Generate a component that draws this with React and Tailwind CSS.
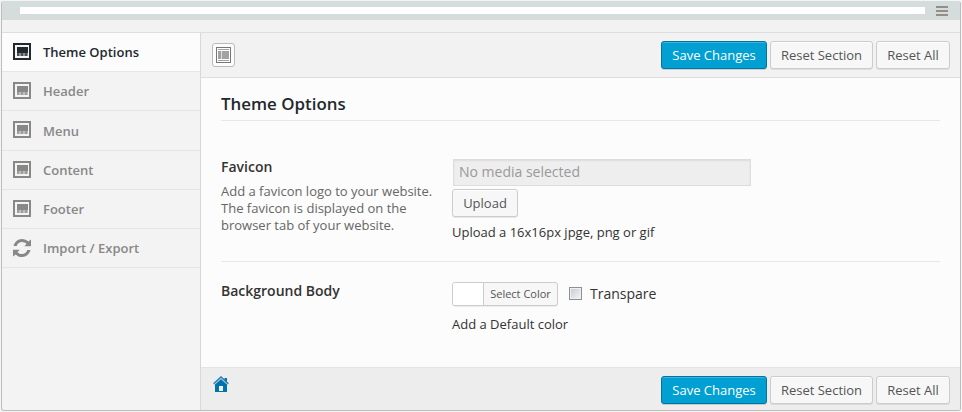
const navItems = [
  { label: 'Theme Options', active: true, size: 'h-[39px]', offset: 'mt-[10px]' },
  { label: 'Header', size: 'h-[39px]', offset: 'mt-[10px]' },
  { label: 'Menu', size: 'h-[40px]', offset: 'mt-[11px]' },
  { label: 'Content', size: 'h-[39px]', offset: 'mt-[10px]' },
  { label: 'Footer', size: 'h-[39px]', offset: 'mt-[10px]' },
  { label: 'Import / Export', refresh: true, size: 'h-[39px]', offset: 'mt-[10px]' },
];

function PanelIcon() {
  return (
    <svg width="18" height="17" viewBox="0 0 18 17" fill="currentColor" shapeRendering="crispEdges">
      <path d="M0 0h18v17H0z" />
      <path d="M2 2h14v13H2z" fill="#f6f4f2" />
      <path d="M4 4h11v6H4z" />
      <path d="M4 10h2v3H4zM8 10h2v3H8zM12 10h2v3h-2z" opacity=".8" />
      <path d="M6 10h2v3H6zM10 10h2v3h-2zM14 10h1v3h-1z" opacity=".5" />
    </svg>
  );
}

function RefreshIcon() {
  return (
    <svg width="18" height="18" viewBox="0 0 18 18" fill="currentColor">
      <path d="M0.500 7C1.500 2.800 4.900 0 9 0c2.500 0 4.700 1 6.300 2.600L18 .6v6.600h-6.600l2.100-2.400C12.300 3.600 10.700 2.900 9 2.900c-2.500 0-4.500 1.500-5.300 4.100z" />
      <path d="M17.500 11C16.500 15.200 13.100 18 9 18c-2.500 0-4.700-1-6.300-2.600L0 17.400v-6.600h6.600l-2.100 2.400c1.200 1.200 2.800 1.900 4.500 1.900 2.500 0 4.500-1.500 5.300-4.100z" />
    </svg>
  );
}

function LayoutIcon() {
  return (
    <svg width="15" height="16" viewBox="0 0 15 16" shapeRendering="crispEdges">
      <path d="M.5.5h14v15H.5z" fill="#fff" stroke="#777" />
      <path d="M2 2h11v1H2zM2 13h11v1H2zM2 4h3v8H2zM6 4h7v8H6z" fill="#a2a2a2" />
      <path d="M5 4h1v8H5z" fill="#dedede" />
    </svg>
  );
}

function HomeIcon() {
  return (
    <svg width="16" height="16" viewBox="0 0 16 16">
      <path d="M2 8.500 8 3l6 5.500V16H2z" fill="#0073aa" />
      <path d="M6 10h4v5H6z" fill="#eef3f6" />
      <path d="M11.500 2H14v5l-2.500-2z" fill="#0073aa" />
      <path d="M1 8.900 8 2.400 15 8.900" fill="none" stroke="#b9bfd6" strokeWidth=".8" />
      <path d="M.6 7.800 8 .9l7.400 6.900" fill="none" stroke="#2a7fb5" strokeWidth="1.400" />
    </svg>
  );
}

const buttonBase =
  'h-7 shrink-0 rounded-[3px] border text-[13px] leading-[26px] text-center whitespace-nowrap';
const plainButton = 'border-[#ccc] bg-[#f7f7f7] text-[#555] shadow-[inset_0_1px_0_#fff,0_1px_0_rgba(0,0,0,.08)]';

function Actions() {
  return (
    <div className="flex gap-[3px]">
      <button className={`${buttonBase} w-[106px] border-[#0074a2] bg-[#00a0d2] text-white shadow-[inset_0_1px_0_rgba(120,200,230,.5),0_1px_0_rgba(0,0,0,.15)]`}>
        Save Changes
      </button>
      <button className={`${buttonBase} ${plainButton} w-[103px]`}>Reset Section</button>
      <button className={`${buttonBase} ${plainButton} w-[74px]`}>Reset All</button>
    </div>
  );
}

export default function App() {
  return (
    <div className="h-[412px] w-[962px] overflow-hidden bg-[#f4f4f4] px-px pt-px font-['Open_Sans',sans-serif] text-[13px] text-[#333]">
      <div className="flex h-[410px] w-[960px] flex-col overflow-hidden rounded-[3px] border border-t-0 border-[#bdbdbd] bg-[#f3f3f3]">
        <header className="flex h-[19px] shrink-0 items-start bg-[#d5dddc] pt-[5px] pl-[18px]">
          <div className="mt-px h-[7px] w-[905px] bg-white" />
          <div className="ml-[11px] flex flex-col gap-[2px]">
            <span className="h-[2px] w-3 bg-[#938e88]" />
            <span className="h-[2px] w-3 bg-[#938e88]" />
            <span className="h-[2px] w-3 bg-[#938e88]" />
          </div>
        </header>
        <div className="h-[13px] shrink-0 border-b border-[#dedede] bg-[#f2f2f2]" />
        <div className="flex min-h-0 grow">
          <nav className="w-[199px] shrink-0 border-r border-[#d8d8d8]">
            {navItems.map((item) => (
              <a
                key={item.label}
                className={`flex items-start border-b border-[#e5e5e5] pl-[11px] font-semibold ${item.size} ${
                  item.active ? 'bg-[#fcfcfc] text-[#23282d]' : 'text-[#888]'
                }`}
              >
                <span className="mt-[10px] w-[30px]">{item.refresh ? <RefreshIcon /> : <PanelIcon />}</span>
                <span className={`leading-[18px] ${item.offset}`}>{item.label}</span>
              </a>
            ))}
          </nav>
          <main className="flex grow flex-col bg-[#fcfcfc]">
            <div className="flex h-[45px] shrink-0 items-start justify-between border-b border-[#dedede] bg-[#f2f2f2] pt-2 pr-[10px] pl-[11px]">
              <button className="mt-[2px] flex h-6 w-[23px] items-center justify-center rounded-[3px] border border-[#bbb] bg-[#fcfcfc]">
                <LayoutIcon />
              </button>
              <Actions />
            </div>
            <div className="grow pr-5 pl-5">
              <h1 className="h-[43px] border-b border-[#e7e7e7] pt-[14px] text-[16.900px] leading-6 font-semibold text-[#23282d]">
                Theme Options
              </h1>
              <section className="flex h-[141px] border-b border-[#e7e7e7] pt-[38px]">
                <div className="w-[231px] shrink-0">
                  <h2 className="text-sm leading-4 font-semibold">Favicon</h2>
                  <p className="mt-[8px] text-[13px] leading-[17px] whitespace-nowrap text-[#666]">
                    Add a favicon logo to your website.
                    <br />
                    The favicon is displayed on the
                    <br />
                    browser tab of your website.
                  </p>
                </div>
                <div>
                  <div className="ml-px h-[27px] w-[298px] border border-[#ddd] bg-[#eee] pl-[5px] text-sm leading-[24px] text-[#999] shadow-[inset_0_1px_2px_rgba(0,0,0,.07)]">
                    No media selected
                  </div>
                  <button className={`${buttonBase} ${plainButton} mt-[3px] block w-[66px]`}>Upload</button>
                  <p className="mt-[6px] leading-[18px]">Upload a 16x16px jpge, png or gif</p>
                </div>
              </section>
              <section className="flex pt-[20px]">
                <h2 className="w-[231px] shrink-0 text-sm leading-[18px] font-semibold">Background Body</h2>
                <div>
                  <div className="flex h-6 items-center">
                    <button className="flex h-6 w-[106px] rounded-[3px] border border-[#ccc] bg-[#f7f7f7] text-[11px] leading-[22px] text-[#555] shadow-[0_1px_0_rgba(0,0,0,.06)]">
                      <span className="h-[22px] w-[31px] shrink-0 rounded-l-[2px] border-r border-[#ccc] bg-white" />
                      <span className="grow whitespace-nowrap">Select Color</span>
                    </button>
                    <span className="mt-[-1px] ml-[11px] h-[13px] w-[13px] border border-[#8e8f8f] bg-linear-to-br from-[#c4c9d2] to-[#f6f6f6] shadow-[inset_0_0_0_1px_#f0f0f0]" />
                    <span className="ml-[8px] text-sm">Transpare</span>
                  </div>
                  <p className="mt-[9px] leading-[18px]">Add a Default color</p>
                </div>
              </section>
            </div>
            <div className="flex h-[43px] shrink-0 items-start justify-between border-t border-[#e4e4e4] bg-[#ededed] pt-2 pr-[10px] pl-3">
              <HomeIcon />
              <Actions />
            </div>
          </main>
        </div>
      </div>
    </div>
  );
}
